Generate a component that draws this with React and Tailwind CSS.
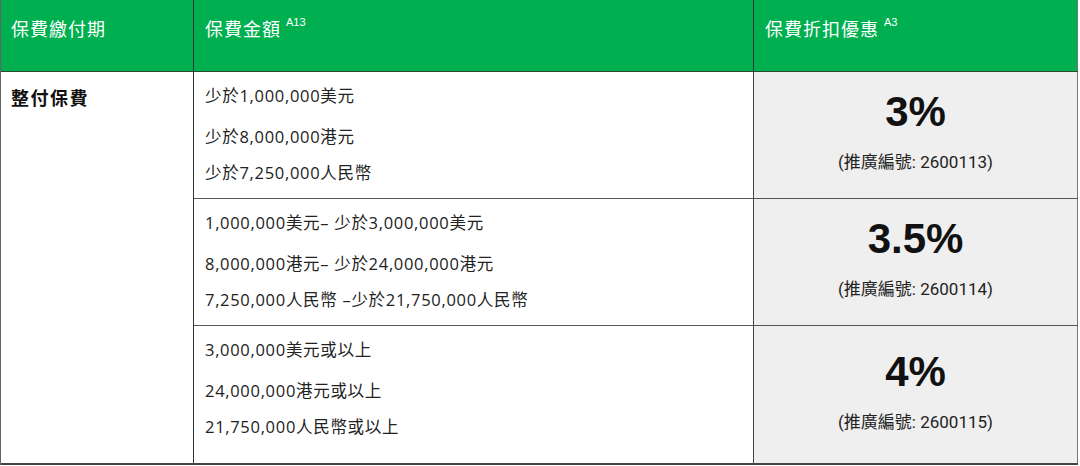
export default function App() {
  const cjk = { fontFamily: '"Open Sans", "Noto Sans CJK TC", sans-serif' };
  const rows = [
    {
      lines: ["少於1,000,000美元", "少於8,000,000港元", "少於7,250,000人民幣"],
      pct: "3%",
      code: "2600113",
    },
    {
      lines: ["1,000,000美元– 少於3,000,000美元", "8,000,000港元– 少於24,000,000港元", "7,250,000人民幣 –少於21,750,000人民幣"],
      pct: "3.5%",
      code: "2600114",
    },
    {
      lines: ["3,000,000美元或以上", "24,000,000港元或以上", "21,750,000人民幣或以上"],
      pct: "4%",
      code: "2600115",
    },
  ];
  const heights = ["h-[127px]", "h-[127px]", "h-[137px]"];
  const sup = { fontFamily: '"Liberation Sans", Arial, sans-serif' };
  return (
    <div className="w-[1080px] h-[466px] bg-white" style={cjk}>
      <div className="w-[1078px] border-l border-[#666]">
        <div className="flex h-[72px] bg-[#00b050] text-white text-[18px] leading-[26px] tracking-[1px] border-b border-[#2a4a30]" style={{ fontFamily: '"Noto Sans CJK TC", sans-serif' }}>
          <div className="w-[193px] shrink-0 border-r border-[#333] pl-[10px] pt-[15px]">保費繳付期</div>
          <div className="w-[560px] shrink-0 border-r border-[#333] pl-[11px] pt-[15px]">
            保費金額<span className="ml-[5px] text-[11px] tracking-normal align-top relative top-[-6px]" style={sup}>A13</span>
          </div>
          <div className="flex-1 border-r border-[#777] pl-[11px] pt-[15px]">
            保費折扣優惠<span className="ml-[5px] text-[11px] tracking-normal align-top relative top-[-6px]" style={sup}>A3</span>
          </div>
        </div>
        <div className="flex border-b-2 border-[#444]">
          <div className="w-[193px] shrink-0 border-r border-[#333] pl-[10px] pt-[12px] text-[18px] leading-[26px] tracking-[1.5px] font-bold text-[#111]" style={{ fontFamily: '"Noto Sans CJK TC", sans-serif' }}>整付保費</div>
          <div className="flex-1 flex flex-col">
            {rows.map((r, i) => (
              <div key={i} className={`flex ${heights[i]} ${i < 2 ? "border-b border-[#555]" : ""}`}>
                <div className="w-[560px] shrink-0 border-r border-[#444] pl-[11px] pt-[12px] text-[16.5px] tracking-[0.7px] text-[#222] leading-[24px] flex flex-col">
                  <div>{r.lines[0]}</div>
                  <div className="mt-[17px]">{r.lines[1]}</div>
                  <div className="mt-[12px]">{r.lines[2]}</div>
                </div>
                <div className="flex-1 bg-[#efefef] border-r border-[#777] flex flex-col items-center justify-center pb-[6px]">
                  <div className="text-[42px] font-bold text-[#111] leading-[44px]" style={sup}>{r.pct}</div>
                  <div className="mt-[16px] text-[17px] text-[#222] leading-[24px]" style={{ fontFamily: 'Roboto, "Noto Sans CJK TC", sans-serif' }}>(推廣編號: {r.code})</div>
                </div>
              </div>
            ))}
          </div>
        </div>
      </div>
    </div>
  );
}
